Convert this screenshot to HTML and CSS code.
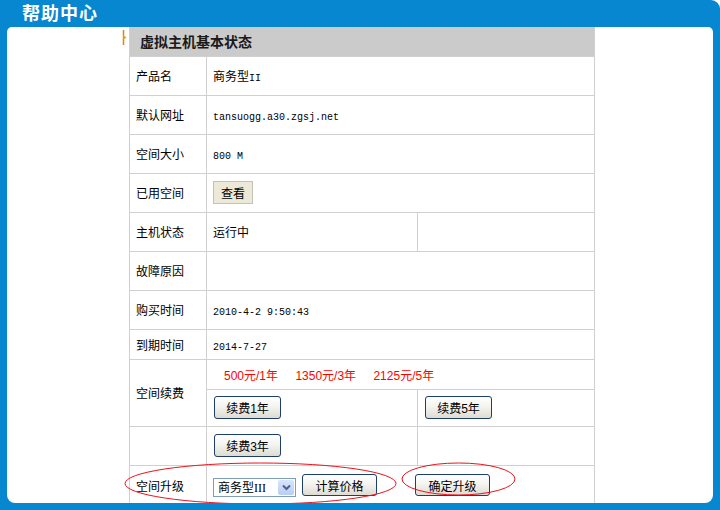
FILE: index.html
```html
<!doctype html>
<html>
    <head>
        <meta charset="utf-8">
        <title>帮助中心</title>
        <link rel="stylesheet" href="styles.css">
    </head>
    <body>
        <div class="frame">
            <h1 class="title">帮助中心</h1>
            <div class="panel">
                <div class="box">
                    <svg class="marker" width="5" height="15" viewBox="0 0 5 15">
                        <path d="M1.5 0 V15" stroke="#d08a10" stroke-width="1.5" fill="none"/>
                        <path d="M1 5 L4.5 7.5 L1 10 Z" fill="#e0a020"/>
                    </svg>
                    <table class="info">
                        <colgroup>
                            <col class="c-label">
                            <col class="c-main">
                            <col class="c-side">
                        </colgroup>
                        <tr class="head">
                            <th colspan="3">虚拟主机基本状态</th>
                        </tr>
                        <tr>
                            <td>产品名</td>
                            <td colspan="2">商务型<span class="en">II</span></td>
                        </tr>
                        <tr>
                            <td>默认网址</td>
                            <td colspan="2"><span class="en">tansuogg.a30.zgsj.net</span></td>
                        </tr>
                        <tr>
                            <td>空间大小</td>
                            <td colspan="2"><span class="en">800 M</span></td>
                        </tr>
                        <tr>
                            <td>已用空间</td>
                            <td colspan="2"><button class="btn-plain">查看</button></td>
                        </tr>
                        <tr>
                            <td>主机状态</td>
                            <td>运行中</td>
                            <td></td>
                        </tr>
                        <tr>
                            <td>故障原因</td>
                            <td colspan="2"></td>
                        </tr>
                        <tr>
                            <td>购买时间</td>
                            <td colspan="2"><span class="en">2010-4-2 9:50:43</span></td>
                        </tr>
                        <tr class="short">
                            <td>到期时间</td>
                            <td colspan="2"><span class="en">2014-7-27</span></td>
                        </tr>
                        <tr class="short">
                            <td rowspan="2">空间续费</td>
                            <td colspan="2" class="prices">
                                <span>500元/1年</span>
                                <span>1350元/3年</span>
                                <span>2125元/5年</span>
                            </td>
                        </tr>
                        <tr class="btn-row">
                            <td><button class="btn">续费1年</button></td>
                            <td><button class="btn">续费5年</button></td>
                        </tr>
                        <tr>
                            <td></td>
                            <td><button class="btn">续费3年</button></td>
                            <td></td>
                        </tr>
                        <tr class="upgrade">
                            <td>空间升级</td>
                            <td colspan="2">
                                <div class="upgrade-line">
                                    <span class="pick">
                                        <span class="pick-text">商务型<span class="en-big">III</span></span>
                                        <span class="pick-arrow">
                                            <svg width="9" height="7" viewBox="0 0 9 7">
                                                <path d="M1 1.5 L4.5 5 L8 1.5" stroke="#4d6185" stroke-width="2" fill="none"/>
                                            </svg>
                                        </span>
                                    </span>
                                    <button class="btn btn-wide">计算价格</button>
                                    <button class="btn btn-wide btn-confirm">确定升级</button>
                                </div>
                            </td>
                        </tr>
                    </table>
                </div>
                <!-- red marks drawn over the upgrade row -->
                <svg class="rings" width="706" height="476" viewBox="0 0 706 476">
                    <ellipse cx="253.5" cy="456.5" rx="135.5" ry="20.5" stroke="#e8141c" stroke-width="1" fill="none"/>
                    <ellipse cx="451.5" cy="452" rx="56.5" ry="16" stroke="#e8141c" stroke-width="1" fill="none"/>
                </svg>
            </div>
        </div>
    </body>
</html>
```

FILE: styles.css
```css
html, body {
    margin: 0;
    background: #fff;
    font-family: "Noto Sans CJK SC", sans-serif;
}

.frame {
    background: #0787cf;
    border-radius: 0 9px 0 0;
    padding: 0 7px 7px 7px;
}

.title {
    margin: 0;
    height: 27px;
    line-height: 25px;
    padding-left: 15px;
    color: #fff;
    font-size: 18px;
    font-weight: bold;
    letter-spacing: 1px;
}

.panel {
    position: relative;
    height: 476px;
    background: #fff;
    border-radius: 5px 5px 8px 8px;
    overflow: hidden;
}

.box {
    display: flex;
    align-items: flex-start;
    padding-left: 115px;
}

.marker {
    flex: none;
    margin: 3px 2px 0 0;
}

.rings {
    position: absolute;
    left: 0;
    top: 0;
    pointer-events: none;
}

/* status table */
.info {
    border-collapse: collapse;
    table-layout: fixed;
    width: 465px;
    font-size: 12px;
    color: #000;
}

.c-label { width: 77px; }
.c-main { width: 211px; }
.c-side { width: 177px; }

.info td, .info th {
    border: 1px solid #d0d0d0;
    padding: 0 0 0 6px;
    vertical-align: middle;
    text-align: left;
}

.info tr { height: 39px; }
.info tr.head { height: 29px; }
.info tr.short { height: 30px; }
.info tr.btn-row { height: 37px; }
.info tr.upgrade { height: 40px; }

.info th {
    border-top: none;
    background: #cbcbcb;
    padding-left: 10px;
    font-size: 14px;
    font-weight: bold;
    color: #1a1a1a;
}

.en {
    font-family: "Liberation Mono", monospace;
    font-size: 10px;
}

.prices {
    padding-left: 17px !important;
    font-family: "Liberation Sans", "Noto Sans CJK SC", sans-serif;
    color: #f00;
}

.prices span + span {
    margin-left: 14px;
}

/* buttons */
.btn-plain {
    width: 40px;
    height: 23px;
    padding: 0;
    border: 1px solid #c5c4b4;
    background: #ece9d8;
    font-family: "Noto Sans CJK SC", sans-serif;
    font-size: 12px;
    color: #000;
}

.btn {
    width: 67px;
    height: 23px;
    margin-left: 1px;
    padding: 0;
    border: 1px solid #1c3f6c;
    border-radius: 3px;
    background: linear-gradient(#ffffff, #f4f4f0 45%, #dedbd2);
    font-family: "Liberation Sans", "Noto Sans CJK SC", sans-serif;
    font-size: 12px;
    color: #000;
}

.btn-wide {
    width: 75px;
    height: 22px;
    margin-left: 0;
}

.upgrade-line {
    display: flex;
    align-items: flex-start;
    gap: 6px;
    padding-top: 1px;
}

.btn-confirm {
    margin-left: 32px;
}

.pick {
    display: flex;
    align-items: center;
    justify-content: space-between;
    box-sizing: border-box;
    width: 83px;
    height: 19px;
    margin-top: 4px;
    padding: 1px;
    border: 1px solid #7f9db9;
    background: #fff;
}

.pick-text {
    padding-left: 3px;
    font-size: 12px;
    line-height: 15px;
}

.en-big {
    font-family: "Liberation Serif", serif;
    font-size: 12px;
}

.pick-arrow {
    display: flex;
    align-items: center;
    justify-content: center;
    width: 16px;
    height: 15px;
    background: linear-gradient(#d8e4fb, #b9cdf6);
    border-radius: 2px;
}
```
